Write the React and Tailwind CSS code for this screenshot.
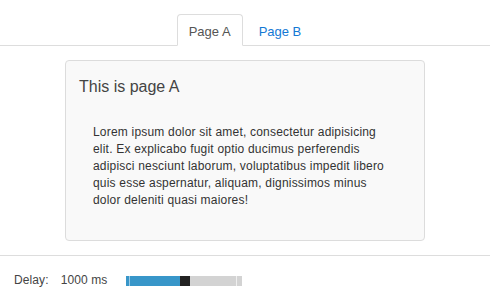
import React from "react";

const lorem =
  "Lorem ipsum dolor sit amet, consectetur adipisicing elit. Ex explicabo fugit optio ducimus perferendis adipisci nesciunt laborum, voluptatibus impedit libero quis esse aspernatur, aliquam, dignissimos minus dolor deleniti quasi maiores!";

function Tabs() {
  return (
    <ul className="flex justify-center gap-[4px] border-b border-[#dddddd] text-[13px] leading-[20px]">
      <li className="-mb-px">
        <span className="block rounded-t-[4px] border border-[#dddddd] border-b-transparent bg-white px-[11px] pt-[7px] pb-[3px] text-[#555555]">
          Page A
        </span>
      </li>
      <li className="-mb-px">
        <a href="#" className="block border border-transparent px-[11px] pt-[7px] pb-[3px] text-[#1478d4]">
          Page B
        </a>
      </li>
    </ul>
  );
}

function Slider({ value = 0.46 }) {
  return (
    <div className="relative h-[10px] w-[116px] bg-[#d3d3d3]">
      <div className="absolute left-0 top-0 h-full bg-[#3896c9]" style={{ width: `${value * 116}px` }} />
      <div className="absolute left-[3px] top-0 h-full w-px bg-[#9cc9e3]" />
      <div className="absolute left-[110px] top-0 h-full w-px bg-[#efefef]" />
      <div className="absolute top-0 h-full w-[10px] bg-[#222222]" style={{ left: `${value * 116}px` }} />
    </div>
  );
}

export default function App() {
  return (
    <div className="h-[298px] w-[490px] bg-white pt-[14px] font-['Liberation_Sans',Arial,sans-serif] text-[#333333]">
      <Tabs />
      <div className="mx-auto mt-[14px] w-[360px] rounded-[4px] border border-[#dcdcdc] bg-[#f9f9f9] px-[13px] pt-[15px]">
        <h3 className="text-[16px] leading-[22px] text-[#444444]">This is page A</h3>
        <p className="mt-[26px] mb-[31px] pl-[14px] pr-[16px] text-[12px] leading-[17px] tracking-[0.2px]">{lorem}</p>
      </div>
      <div className="mt-[14px] border-t border-[#dddddd] px-[14px] pt-[16px]">
        <div className="flex items-center text-[12px] leading-[17px] tracking-[0.1px] text-[#444444]">
          <span>Delay:</span>
          <span className="ml-[12px]">1000 ms</span>
          <div className="ml-[19px]">
            <Slider />
          </div>
        </div>
      </div>
    </div>
  );
}
